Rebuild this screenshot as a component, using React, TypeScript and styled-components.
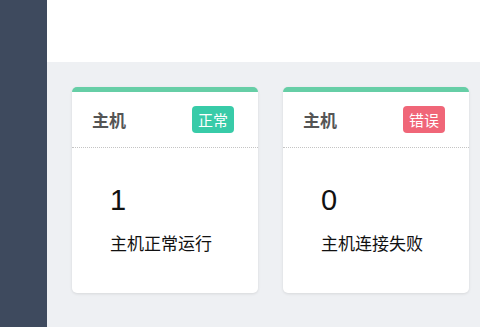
import React from "react";
import styled, { createGlobalStyle } from "styled-components";

const GlobalStyle = createGlobalStyle`
  html, body {
    margin: 0;
    padding: 0;
    font-family: "Liberation Sans", "Noto Sans CJK SC", sans-serif;
  }
  * {
    box-sizing: border-box;
  }
`;

const Layout = styled.div`
  display: flex;
  width: 480px;
  height: 327px;
  overflow: hidden;
`;

const Sidebar = styled.div`
  width: 47px;
  flex-shrink: 0;
  background: #3e4a5e;
`;

const Main = styled.div`
  flex: 1;
  display: flex;
  flex-direction: column;
  background: #eef0f3;
`;

const TopBar = styled.div`
  height: 62px;
  background: #ffffff;
`;

const CardRow = styled.div`
  display: flex;
  gap: 25px;
  padding: 25px 0 0 25px;
`;

const Card = styled.div`
  width: 186px;
  height: 206px;
  background: #ffffff;
  border-top: 5px solid #66cea6;
  border-radius: 5px;
  box-shadow: 0 1px 3px rgba(0, 0, 0, 0.1);
  display: flex;
  flex-direction: column;
`;

const CardHead = styled.div`
  height: 56px;
  display: flex;
  align-items: center;
  justify-content: space-between;
  padding: 0 24px 0 20px;
  border-bottom: 1px dotted #c4c4c4;
`;

const CardTitle = styled.span`
  font-size: 17px;
  font-weight: bold;
  color: #555555;
`;

const Badge = styled.span<{ $tone: "ok" | "err" }>`
  height: 27px;
  padding: 0 6px;
  display: flex;
  align-items: center;
  border-radius: 4px;
  font-size: 15px;
  color: #ffffff;
  background: ${(p) => (p.$tone === "ok" ? "#38cba8" : "#f06678")};
`;

const CardBody = styled.div`
  padding: 36px 38px 0;
  display: flex;
  flex-direction: column;
`;

const Count = styled.div`
  font-size: 29px;
  line-height: 32px;
  color: #111111;
`;

const Caption = styled.div`
  margin-top: 14px;
  font-size: 17px;
  color: #111111;
`;

const hosts = [
  { title: "主机", status: "正常", tone: "ok" as const, count: 1, caption: "主机正常运行" },
  { title: "主机", status: "错误", tone: "err" as const, count: 0, caption: "主机连接失败" },
];

export default function App() {
  return (
    <>
      <GlobalStyle />
      <Layout>
        <Sidebar />
        <Main>
          <TopBar />
          <CardRow>
            {hosts.map((h) => (
              <Card key={h.status}>
                <CardHead>
                  <CardTitle>{h.title}</CardTitle>
                  <Badge $tone={h.tone}>{h.status}</Badge>
                </CardHead>
                <CardBody>
                  <Count>{h.count}</Count>
                  <Caption>{h.caption}</Caption>
                </CardBody>
              </Card>
            ))}
          </CardRow>
        </Main>
      </Layout>
    </>
  );
}
